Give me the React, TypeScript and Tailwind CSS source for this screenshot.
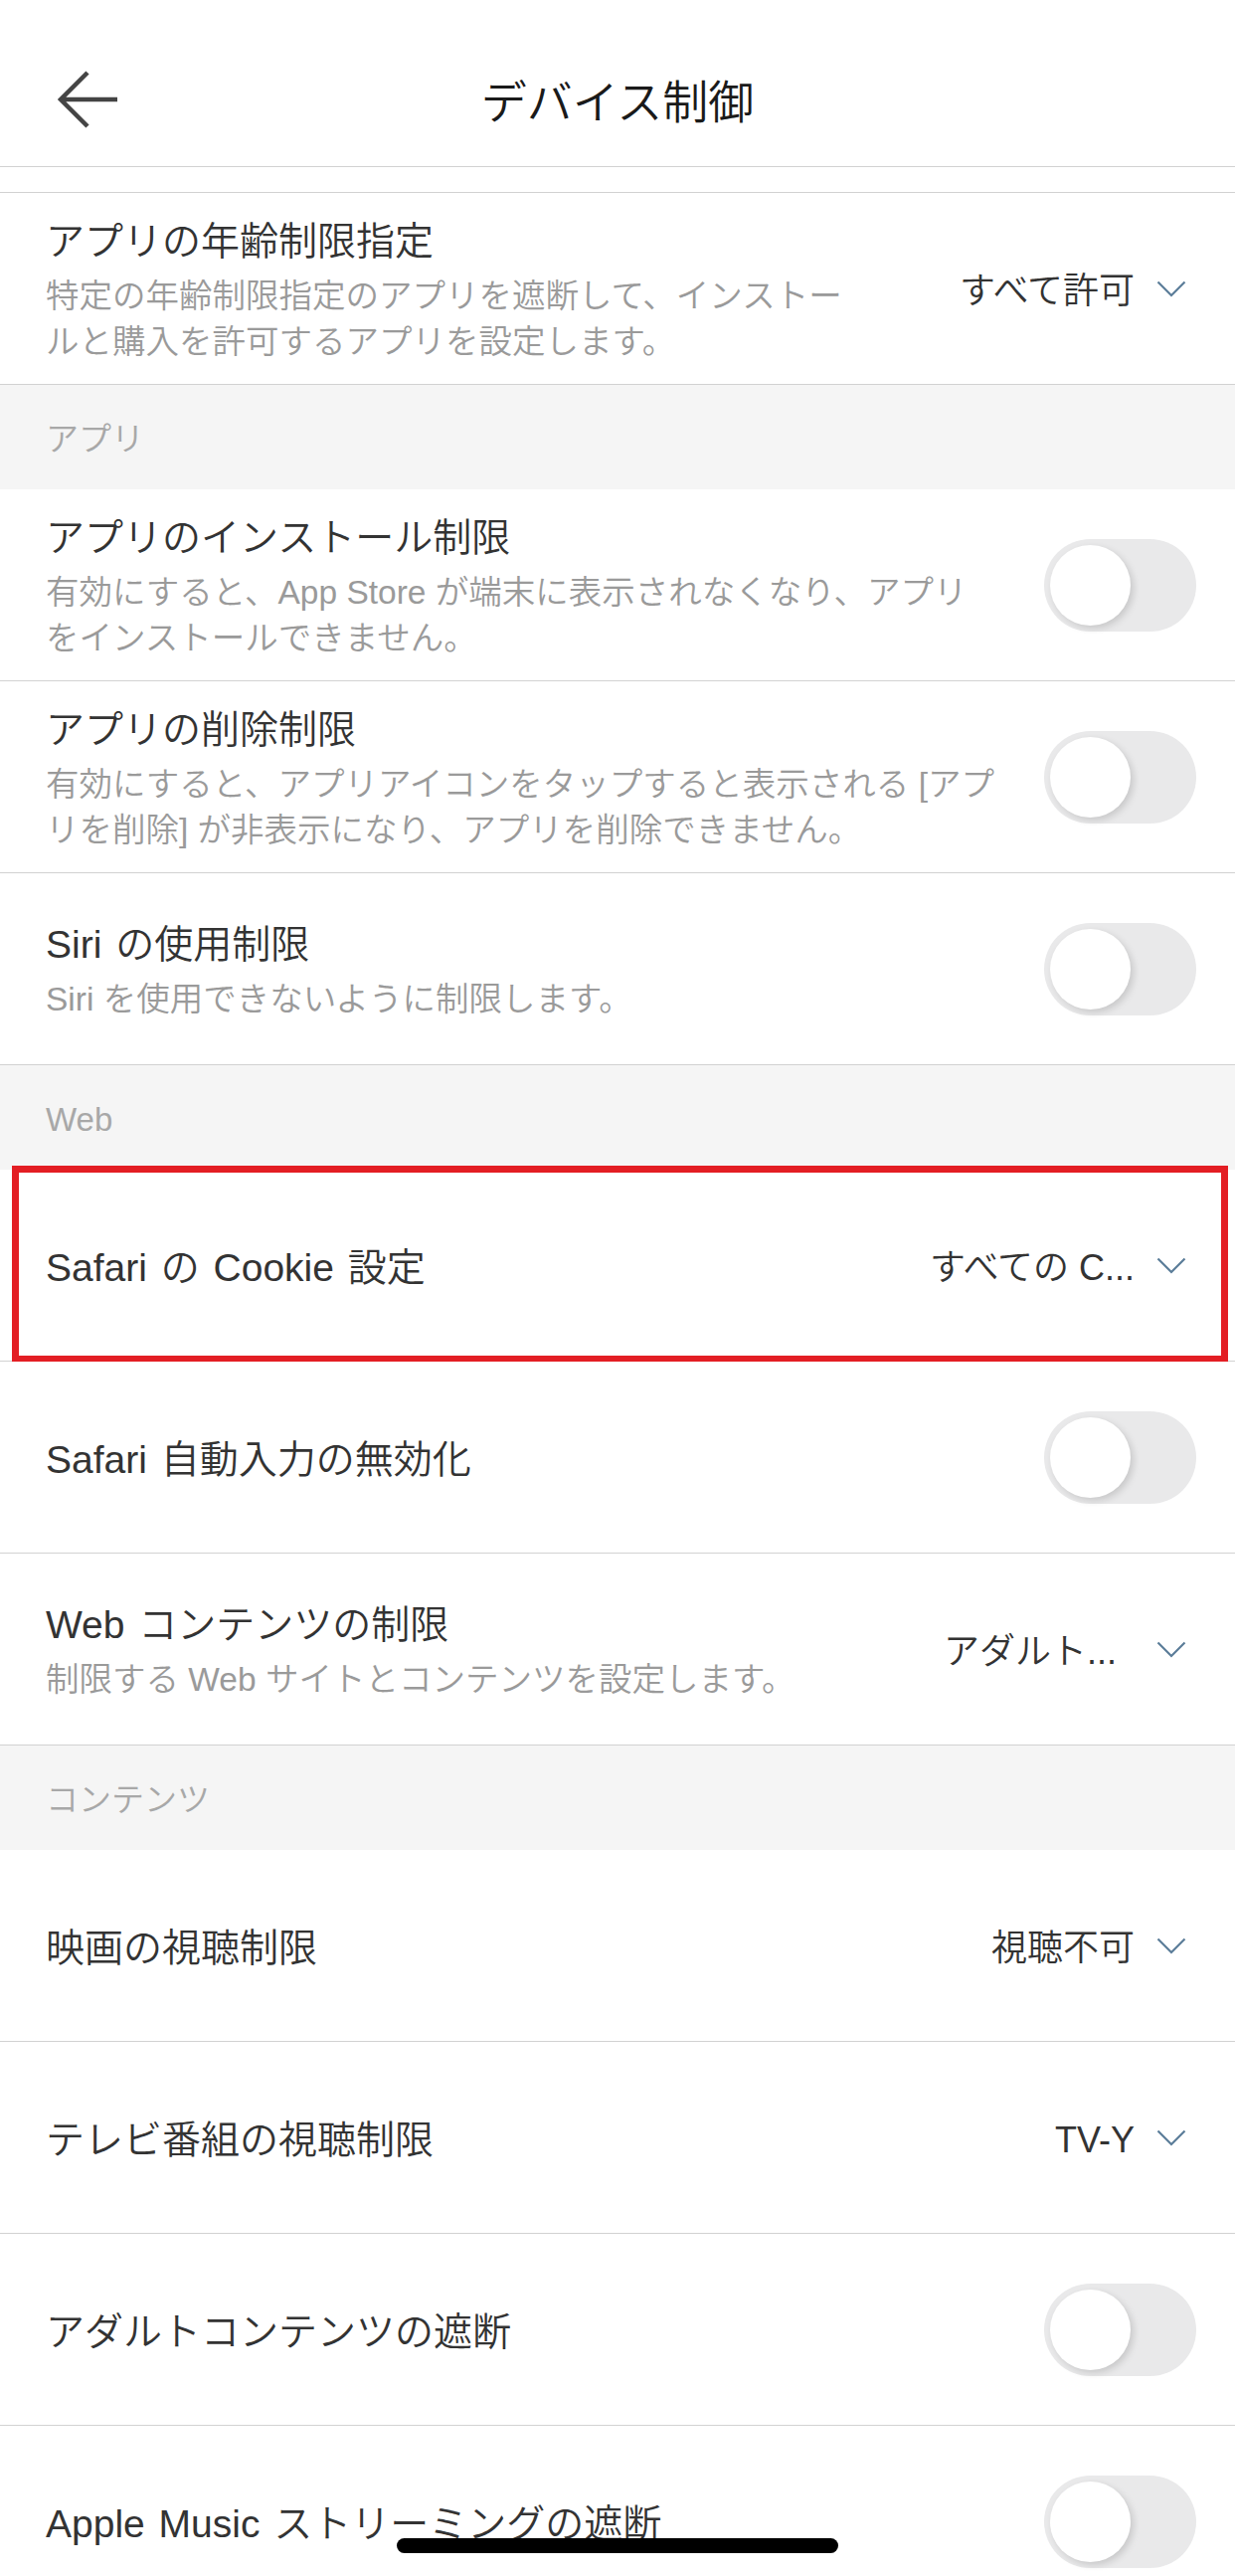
import type { ReactNode } from 'react'

type RowItem = {
  title: string
  desc?: string[]
  value?: string
  valuePad?: boolean
  highlight?: boolean
}

type Section = {
  label?: string
  items: RowItem[]
}

const sections: Section[] = [
  {
    items: [
      {
        title: 'アプリの年齢制限指定',
        desc: [
          '特定の年齢制限指定のアプリを遮断して、インストー',
          'ルと購入を許可するアプリを設定します。',
        ],
        value: 'すべて許可',
      },
    ],
  },
  {
    label: 'アプリ',
    items: [
      {
        title: 'アプリのインストール制限',
        desc: [
          '有効にすると、App Store が端末に表示されなくなり、アプリ',
          'をインストールできません。',
        ],
      },
      {
        title: 'アプリの削除制限',
        desc: [
          '有効にすると、アプリアイコンをタップすると表示される [アプ',
          'リを削除] が非表示になり、アプリを削除できません。',
        ],
      },
      {
        title: 'Siri の使用制限',
        desc: ['Siri を使用できないように制限します。'],
      },
    ],
  },
  {
    label: 'Web',
    items: [
      { title: 'Safari の Cookie 設定', value: 'すべての C...', highlight: true },
      { title: 'Safari 自動入力の無効化' },
      {
        title: 'Web コンテンツの制限',
        desc: ['制限する Web サイトとコンテンツを設定します。'],
        value: 'アダルト...',
        valuePad: true,
      },
    ],
  },
  {
    label: 'コンテンツ',
    items: [
      { title: '映画の視聴制限', value: '視聴不可' },
      { title: 'テレビ番組の視聴制限', value: 'TV-Y' },
      { title: 'アダルトコンテンツの遮断' },
      { title: 'Apple Music ストリーミングの遮断' },
    ],
  },
]

function Chevron() {
  return (
    <svg width="30" height="17" viewBox="0 0 30 17" className="shrink-0">
      <polyline
        points="1.5,1.5 15,15 28.5,1.5"
        fill="none"
        stroke="#5b7d99"
        strokeWidth="2.2"
      />
    </svg>
  )
}

function Toggle() {
  return (
    <div className="mr-[39px] flex h-[93px] w-[153px] shrink-0 items-center rounded-full bg-[#e9e9ea] pl-[6px]">
      <div className="h-[81px] w-[81px] rounded-full bg-white shadow-[3px_3px_7px_rgba(0,0,0,0.14)]" />
    </div>
  )
}

function Row({ item }: { item: RowItem }) {
  let right: ReactNode
  if (item.value) {
    right = (
      <div className="mr-[49px] flex shrink-0 items-center gap-[22px]">
        <span
          className={`whitespace-nowrap pt-[5px] text-[36px] leading-none text-[#333] ${
            item.valuePad ? 'pr-[18px]' : ''
          }`}
        >
          {item.value}
        </span>
        <Chevron />
      </div>
    )
  } else {
    right = <Toggle />
  }

  return (
    <div className="relative flex h-[193px] items-center border-b border-[#d2d2d2] bg-white pl-[46px]">
      <div className="min-w-0 flex-1 pt-[6px]">
        <p className="whitespace-nowrap text-[39px] leading-[48px] text-[#333] [word-spacing:3px]">
          {item.title}
        </p>
        {item.desc && (
          <div className="mt-[8px] text-[33.5px] leading-[46px] text-[#9a9a9a]">
            {item.desc.map((line) => (
              <p key={line} className="whitespace-nowrap">
                {line}
              </p>
            ))}
          </div>
        )}
      </div>
      {right}
      {item.highlight && (
        <div className="pointer-events-none absolute -top-[4px] -bottom-[2px] left-[12px] right-[7px] border-[7px] border-[#e31e24]" />
      )}
    </div>
  )
}

export default function App() {
  return (
    <div className="relative h-[2590px] w-[1242px] overflow-hidden bg-white font-['Liberation_Sans','Noto_Sans_CJK_JP',sans-serif] font-[350]">
      {/* Header */}
      <div className="grid h-[168px] grid-cols-[1fr_auto_1fr] items-center border-b border-[#d2d2d2] pt-[32px]">
        <div className="pl-[56px]">
          <svg width="62" height="58" viewBox="0 0 62 58">
            <path
              d="M62 29H5M32 2L5 29L32 56"
              fill="none"
              stroke="#444"
              strokeWidth="4.5"
            />
          </svg>
        </div>
        <h1 className="pt-[6px] text-[46px] font-[350] leading-none text-[#1a1a1a]">
          デバイス制御
        </h1>
        <div />
      </div>
      <div className="h-[26px] border-b border-[#d2d2d2]" />

      {sections.map((section, i) => (
        <div key={i}>
          {section.label && (
            <div className="flex h-[105px] items-center bg-[#f5f5f5] pl-[46px] pt-[4px] text-[33px] text-[#a8a8a8]">
              {section.label}
            </div>
          )}
          {section.items.map((item) => (
            <Row key={item.title} item={item} />
          ))}
        </div>
      ))}

      {/* Home indicator */}
      <div className="absolute bottom-[23px] left-1/2 h-[15px] w-[444px] -translate-x-1/2 rounded-full bg-black" />
    </div>
  )
}
